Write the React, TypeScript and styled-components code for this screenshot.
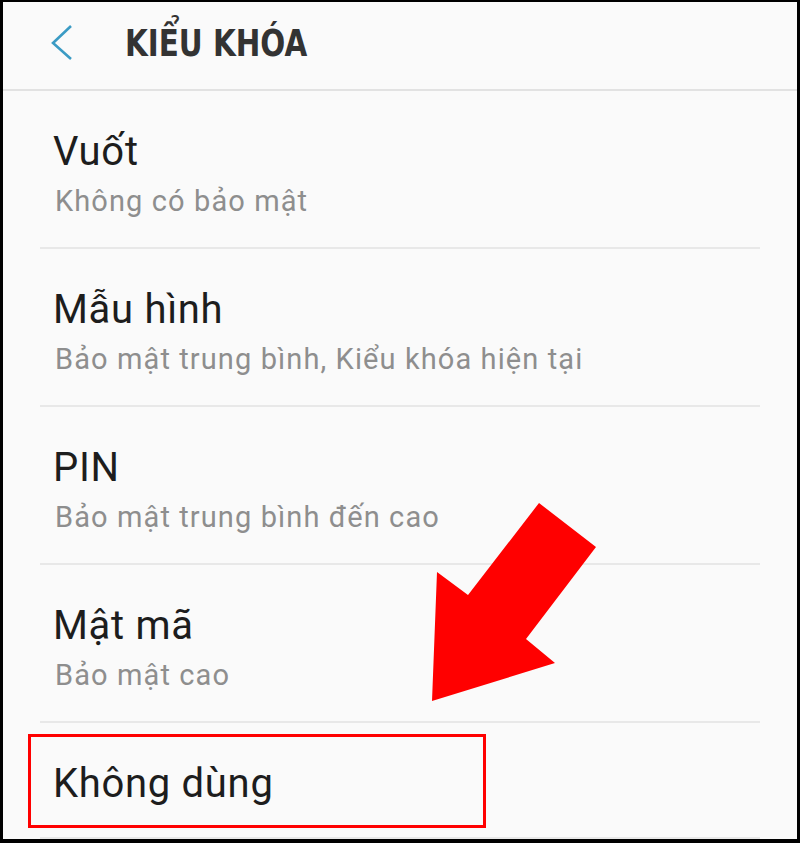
import styled, { createGlobalStyle } from "styled-components";

const GlobalStyle = createGlobalStyle`
  html, body {
    margin: 0;
    padding: 0;
    background: #000;
  }
  * {
    box-sizing: border-box;
  }
`;

const Frame = styled.div`
  position: relative;
  width: 800px;
  min-height: 843px;
  background: #fafafa;
  border-style: solid;
  border-color: #000;
  border-width: 2px 3px 4px 3px;
  font-family: Roboto, "Noto Sans", sans-serif;
`;

const Header = styled.header`
  height: 89px;
  display: flex;
  align-items: center;
  padding-left: 45px;
  border-bottom: 2px solid #e2e2e2;
`;

const BackButton = styled.button`
  width: 30px;
  height: 40px;
  padding: 0;
  border: 0;
  background: none;
  display: flex;
  align-items: center;
  justify-content: center;
  margin-right: 47px;
  margin-top: -6px;
`;

/* no condensed face installed: squeeze the bold face to the narrow width */
const Title = styled.h1`
  margin: 0 0 6px 0;
  font-family: "Liberation Sans Narrow", "DejaVu Sans Condensed", "DejaVu Sans", sans-serif;
  font-stretch: condensed;
  font-weight: 700;
  font-size: 38px;
  color: #333;
  transform: scaleX(0.86);
  transform-origin: left center;
`;

const List = styled.ul`
  list-style: none;
  margin: 0 37px;
  padding: 0;
`;

const Row = styled.li<{ $last?: boolean }>`
  position: relative;
  height: ${(p) => (p.$last ? "116px" : "158px")};
  padding: 38px 15px 0 13px;
  border-bottom: 2px solid #e8e8e8;
`;

const ItemTitle = styled.div`
  font-size: 40px;
  line-height: 46px;
  letter-spacing: 0.7px;
  color: #1d1d1d;
`;

const ItemSub = styled.div`
  margin-top: 10px;
  padding-left: 2px;
  font-size: 29px;
  line-height: 32px;
  letter-spacing: 1.1px;
  color: #8e8e8e;
`;

const Highlight = styled.div`
  position: absolute;
  left: -12px;
  top: 11px;
  width: 458px;
  height: 94px;
  border: 3px solid #ff0000;
`;

const Arrow = styled.svg`
  position: absolute;
  left: 417px;
  top: 488px;
  width: 190px;
  height: 220px;
`;

const items = [
  { title: "Vuốt", sub: "Không có bảo mật" },
  { title: "Mẫu hình", sub: "Bảo mật trung bình, Kiểu khóa hiện tại" },
  { title: "PIN", sub: "Bảo mật trung bình đến cao" },
  { title: "Mật mã", sub: "Bảo mật cao" },
];

export default function App() {
  return (
    <>
      <GlobalStyle />
      <Frame>
        <Header>
          <BackButton aria-label="back">
            <svg width="30" height="40" viewBox="0 0 30 40">
              <polyline
                points="23,3 5,20 23,36"
                fill="none"
                stroke="#3b9bc4"
                strokeWidth="2.6"
              />
            </svg>
          </BackButton>
          <Title>KIỂU KHÓA</Title>
        </Header>
        <List>
          {items.map((it) => (
            <Row key={it.title}>
              <ItemTitle>{it.title}</ItemTitle>
              <ItemSub>{it.sub}</ItemSub>
            </Row>
          ))}
          <Row $last>
            <ItemTitle>Không dùng</ItemTitle>
            <Highlight />
          </Row>
        </List>
        <Arrow viewBox="420 490 190 220">
          <polygon
            points="539,503 596,547 526,639 555,663 432,701 437,572 468,595"
            fill="#ff0000"
          />
        </Arrow>
      </Frame>
    </>
  );
}
